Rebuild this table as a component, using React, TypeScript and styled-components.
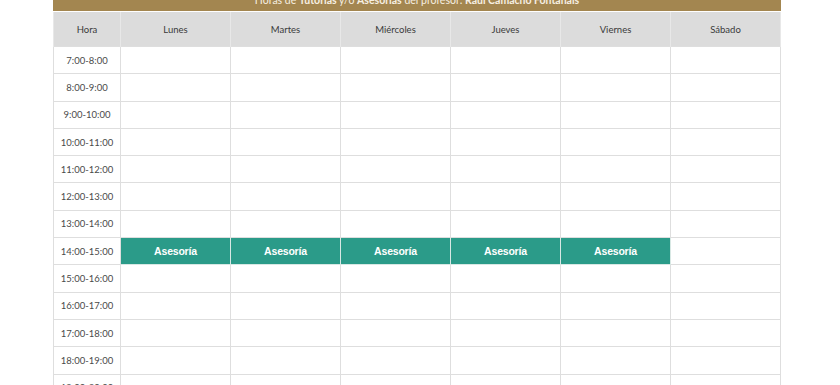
import React from 'react';
import styled, { createGlobalStyle } from 'styled-components';

const GlobalStyle = createGlobalStyle`
  html, body {
    margin: 0;
    padding: 0;
    background: #ffffff;
    overflow: hidden;
  }
  body {
    font-family: Lato, "Open Sans", "Liberation Sans", sans-serif;
  }
`;

const Page = styled.div`
  width: 728px;
  margin: -17px 0 0 53px;
`;

const TitleBar = styled.div`
  background: #a38650;
  color: #f6efe2;
  font-size: 10.5px;
  line-height: 14px;
  padding: 10px 0 4px;
  text-align: center;

  b {
    font-weight: 700;
  }
`;

const Table = styled.table`
  width: 100%;
  border-collapse: collapse;
  table-layout: fixed;
  margin-top: 1px;
`;

const HeadCell = styled.th`
  background: #dcdcdc;
  color: #3a3a3a;
  font-weight: 400;
  font-size: 9.5px;
  height: 34px;
  padding: 0;
  border-left: 1px solid #e8e8e8;
  border-right: 1px solid #e8e8e8;
`;

const Row = styled.tr`
  height: 27.3px;
`;

const Cell = styled.td<{ $busy?: boolean }>`
  padding: 0;
  border: 1px solid #dedede;
  text-align: center;
  font-size: 9.5px;
  color: #4a4a4a;
  background: ${({ $busy }) => ($busy ? '#2b9b89' : '#ffffff')};
  ${({ $busy }) =>
    $busy &&
    `
    color: #ffffff;
    font-family: "Liberation Sans", Arial, sans-serif;
    font-weight: 700;
    font-size: 10.5px;
    letter-spacing: -0.2px;
    border-color: #d8e8e4;
  `}
`;

const days = ['Lunes', 'Martes', 'Miércoles', 'Jueves', 'Viernes', 'Sábado'];
const hours = Array.from({ length: 13 }, (_, i) => `${7 + i}:00-${8 + i}:00`);

const App: React.FC = () => {
  return (
    <>
      <GlobalStyle />
      <Page>
        <TitleBar>
          Horas de <b>Tutorías</b> y/o <b>Asesorías</b> del profesor: <b>Raúl Camacho Fontanals</b>
        </TitleBar>
        <Table>
          <colgroup>
            <col style={{ width: 67 }} />
            {days.map((d) => (
              <col key={d} />
            ))}
          </colgroup>
          <thead>
            <tr>
              <HeadCell>Hora</HeadCell>
              {days.map((d) => (
                <HeadCell key={d}>{d}</HeadCell>
              ))}
            </tr>
          </thead>
          <tbody>
            {hours.map((h) => {
              const busy = h === '14:00-15:00';
              return (
                <Row key={h}>
                  <Cell>{h}</Cell>
                  {days.map((d) => {
                    const on = busy && d !== 'Sábado';
                    return (
                      <Cell key={d} $busy={on}>
                        {on ? 'Asesoría' : ''}
                      </Cell>
                    );
                  })}
                </Row>
              );
            })}
          </tbody>
        </Table>
      </Page>
    </>
  );
};

export default App;
